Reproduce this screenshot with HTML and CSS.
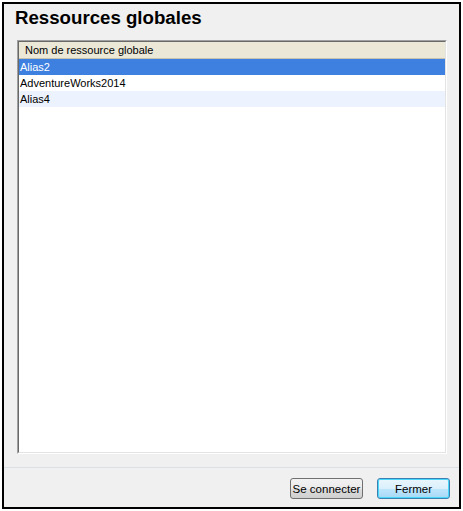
FILE: index.html
```html
<!DOCTYPE html>
<html>
<head>
<meta charset="utf-8">
<link rel="stylesheet" href="styles.css">
</head>
<body>
<div class="frame">
  <h1 class="title">Ressources globales</h1>
  <div class="list-outer">
    <div class="list">
      <div class="header">Nom de ressource globale</div>
      <div class="row selected">Alias2</div>
      <div class="row">AdventureWorks2014</div>
      <div class="row alt">Alias4</div>
    </div>
  </div>
  <div class="footer">
    <button class="btn">Se connecter</button>
    <button class="btn default">Fermer</button>
  </div>
</div>
</body>
</html>
```

FILE: styles.css
```css
html, body {
  margin: 0;
  padding: 0;
  background: #ffffff;
}
body {
  font-family: "Liberation Sans", Arial, sans-serif;
}
.frame {
  margin: 2px 0 0 2px;
  width: 455px;
  height: 503px;
  border: 2px solid #000;
  background: #f0f0f0;
  display: flex;
  flex-direction: column;
}
.title {
  margin: 3px 0 0 11px;
  font-size: 18.67px;
  line-height: 22px;
  font-weight: bold;
  color: #000;
}
.list-outer {
  margin: 11px 12px 0 13px;
  height: 412px;
  border-style: solid;
  border-width: 1px;
  border-color: #a0a0a0 #ffffff #ffffff #a0a0a0;
  display: flex;
}
.list {
  flex: 1;
  border-style: solid;
  border-width: 1px;
  border-color: #696969 #e3e3e3 #e3e3e3 #696969;
  background: #fff;
  font-size: 11px;
  line-height: 16px;
  color: #000;
}
.header {
  background: #ebe8d7;
  border-bottom: 1px solid #c5c2b2;
  padding-left: 6px;
  height: 16px;
}
.row {
  height: 16px;
  padding-left: 1px;
}
.row.selected {
  background: #3d80df;
  color: #fff;
}
.row.alt {
  background: #ecf3fe;
}
.footer {
  margin-top: 13px;
  border-top: 1px solid #d9e1e7;
  flex: 1;
  display: flex;
  justify-content: flex-end;
  align-items: flex-start;
  gap: 14px;
  padding: 10px 9px 0 0;
}
.btn {
  width: 73px;
  height: 21px;
  margin: 0;
  padding: 0;
  font-family: "Liberation Sans", Arial, sans-serif;
  font-size: 11.5px;
  color: #000;
  border: 1px solid #707070;
  border-radius: 3px;
  background: linear-gradient(#f2f2f2 0%, #ebebeb 50%, #dddddd 51%, #cfcfcf 100%);
}
.btn.default {
  border-color: #3c7fb1;
  box-shadow: inset 0 0 0 1px #48d8fb;
  background: linear-gradient(#eaf6fd 0%, #d9f0fc 50%, #bee6fd 51%, #a7d9f5 100%);
}
```
